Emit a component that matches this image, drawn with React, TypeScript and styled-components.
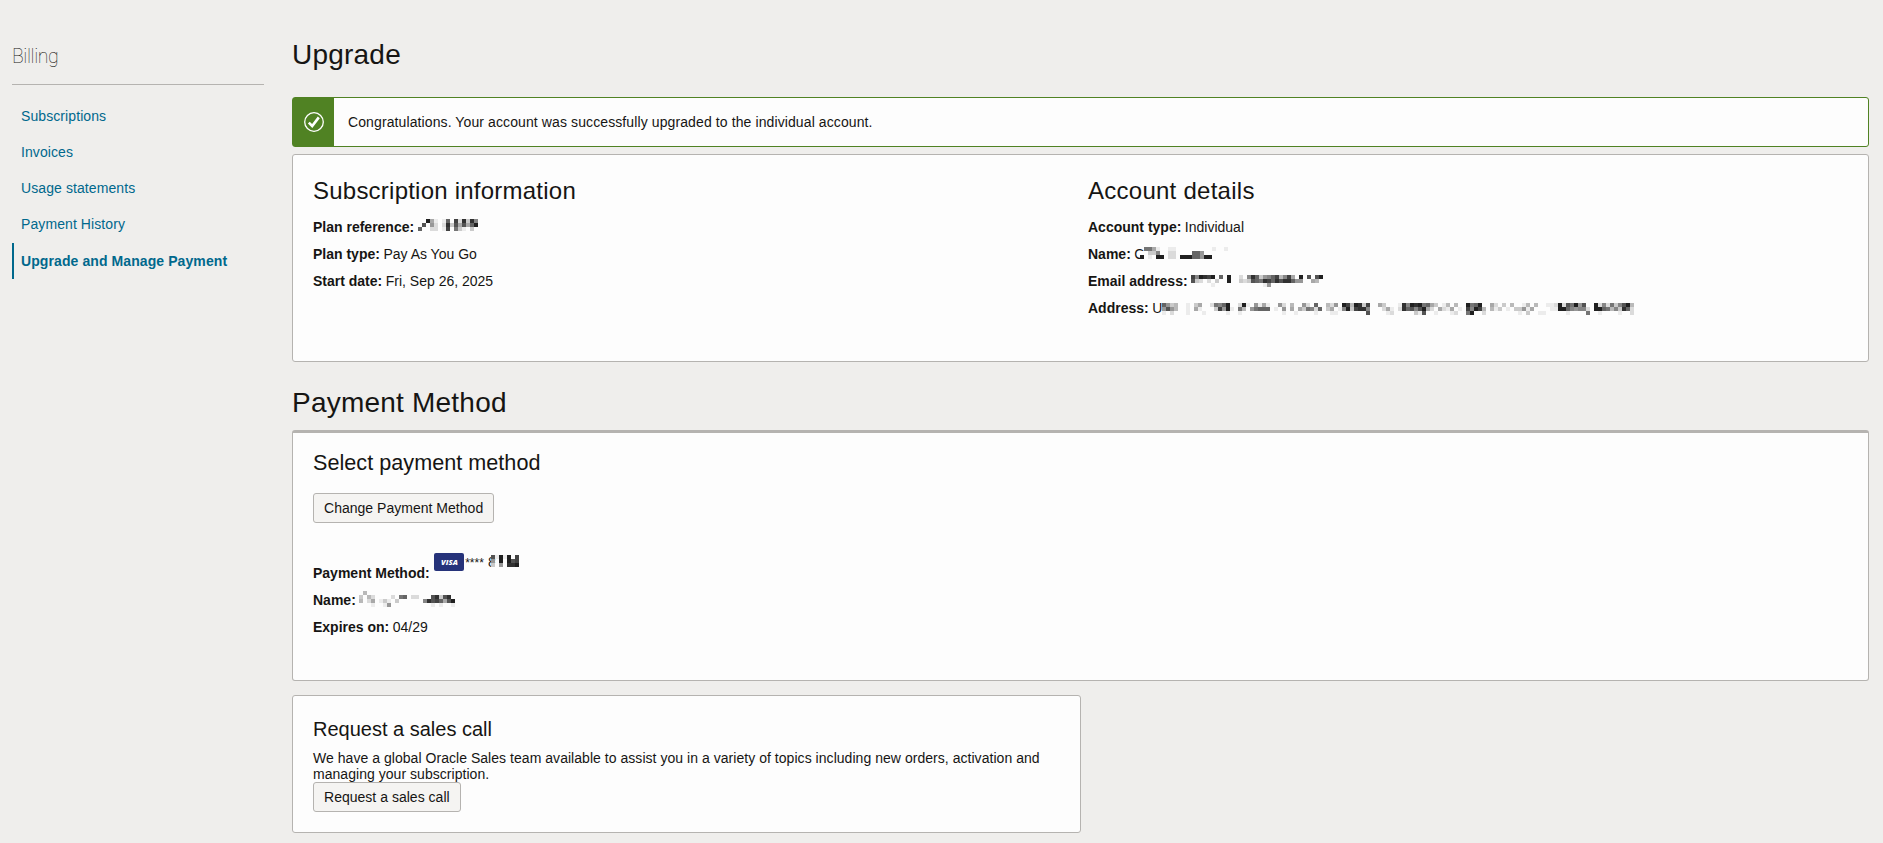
import React from "react";
import styled, { createGlobalStyle } from "styled-components";

const Global = createGlobalStyle`
  * { box-sizing: border-box; }
  body {
    margin: 0;
    background: #efeeec;
    color: #161513;
    font: 14px/16px "Liberation Sans", Arial, sans-serif;
  }
  #root { height: 843px; overflow: hidden; }
  h1, h2, h3, p, ul { margin: 0; padding: 0; font-weight: 400; }
`;

const Page = styled.div`
  display: flex;
  gap: 28px;
  height: 843px;
  padding: 0 14px 0 12px;
`;

const Sidebar = styled.nav`
  width: 252px;
  flex: none;
`;

const SideTitle = styled.h2`
  height: 85px;
  padding-top: 45px;
  border-bottom: 1px solid #b5b3b0;
  font: 100 19.5px/24px Roboto, "Liberation Sans", sans-serif;
  letter-spacing: -0.4px;
  color: #161513;
`;

const NavList = styled.ul`
  list-style: none;
  padding-top: 13px;
`;

const NavItem = styled.li<{ $active?: boolean }>`
  height: 36px;
  margin-top: ${(p) => (p.$active ? "1px" : "0")};
  padding-left: ${(p) => (p.$active ? "7px" : "9px")};
  border-left: ${(p) => (p.$active ? "2px solid #00688c" : "0")};
  line-height: 36px;
  letter-spacing: 0.09px;
  font-weight: ${(p) => (p.$active ? 700 : 400)};
  color: #00688c;
`;

const Main = styled.main`
  flex: 1;
  min-width: 0;
`;

const PageTitle = styled.h1<{ $top: number; $bottom: number }>`
  padding: ${(p) => p.$top}px 0 ${(p) => p.$bottom}px;
  font-size: 28px;
  line-height: 32px;
  letter-spacing: 0.22px;
`;

const Alert = styled.div`
  display: flex;
  height: 50px;
  margin-bottom: 7px;
  border: 1px solid #508223;
  border-radius: 3px;
  background: #fdfdfd;
  line-height: 48px;
  letter-spacing: 0.105px;
`;

const AlertIcon = styled.div`
  display: flex;
  align-items: center;
  justify-content: center;
  width: 41px;
  margin-right: 14px;
  background: #508223;
`;

const Card = styled.section<{ $height: number; $pad: number; $thick?: boolean; $width?: number }>`
  width: ${(p) => (p.$width ? `${p.$width}px` : "auto")};
  height: ${(p) => p.$height}px;
  padding: ${(p) => p.$pad}px 20px 0;
  border: 1px solid #b5b3b0;
  border-top-width: ${(p) => (p.$thick ? 3 : 1)}px;
  border-radius: 3px;
  background: #fdfdfd;
`;

const Columns = styled.div`
  display: grid;
  grid-template-columns: 775px 1fr;
`;

const Heading = styled.h3<{ $size: number; $gap: number; $spacing?: number }>`
  margin-bottom: ${(p) => p.$gap}px;
  font-size: ${(p) => p.$size}px;
  line-height: 28px;
  letter-spacing: ${(p) => p.$spacing ?? 0}px;
`;

const Field = styled.p`
  display: flex;
  gap: 3.5px;
  height: 27px;
  line-height: 27px;
  white-space: pre;
`;

const Button = styled.button`
  display: block;
  height: 30px;
  padding: 0 10px;
  border: 1px solid #b5b3b0;
  border-radius: 3px;
  background: #f5f4f2;
  color: #161513;
  font: inherit;
  letter-spacing: 0.02px;
`;

const PaymentFields = styled.div`
  padding-top: 37px;
`;

const CardNumber = styled.span`
  display: flex;
  align-items: center;
  height: 18px;
  margin: -7px 0 0 1px;
`;

const Stars = styled.span`
  margin: 2px 4px 0 1px;
  font-size: 12px;
`;

const Copy = styled.p`
  width: 740px;
  letter-spacing: 0.04px;
`;

const SalesGap = styled.div`
  height: 14px;
`;

const MosaicSvg = styled.svg<{ $top: number; $left: number }>`
  display: block;
  flex: none;
  margin: ${(p) => p.$top}px 0 0 ${(p) => p.$left}px;
`;

/* Each character is the darkness of one 4px cell in hex; "." leaves the cell clear. */
const Mosaic = ({ rows, top = 6, left = 0 }: { rows: string[]; top?: number; left?: number }) => {
  const width = Math.max(...rows.map((r) => r.length)) * 4;
  return (
    <MosaicSvg $top={top} $left={left} width={width} height={rows.length * 4} shapeRendering="crispEdges">
      {rows.flatMap((row, y) =>
        [...row].map((c, x) => {
          if (c === ".") return null;
          const v = 253 - parseInt(c, 16) * 17;
          return <rect key={`${x}-${y}`} x={x * 4} y={y * 4} width={4} height={4} fill={`rgb(${v},${v},${v})`} />;
        })
      )}
    </MosaicSvg>
  );
};

const CheckIcon = () => (
  <svg width="22" height="22" viewBox="0 0 22 22" fill="none" stroke="#fff">
    <circle cx="11" cy="11" r="9.3" strokeWidth="1.3" />
    <path d="M5.8 11.6l3.4 3.4L15.8 6.4" strokeWidth="2.6" />
  </svg>
);

const VisaIcon = () => (
  <svg width="30" height="18" viewBox="0 0 30 18">
    <rect width="30" height="18" rx="2" fill="#26337a" />
    <text x="7" y="12" fill="#fff" fontFamily="Open Sans" fontSize="7.6" fontWeight="800" fontStyle="italic" textLength="17">VISA</text>
  </svg>
);

const links = ["Subscriptions", "Invoices", "Usage statements", "Payment History"];

const planMosaic = ["..d51.19.b2c3c7", ".a.62.2c3a5a59d", "9..22.1b.831.3"];
const nameMosaic = [".8851..11.........1..1", "0033700220000996......", "d010dd022.ddd996dd...."];
const emailMosaic = ["b7dcbd.9.d..2.7c93679b47b5.d.a.ad", "a32.2.3..d..323a98cb9cacc966..54.", ".....1............16............."];
const addressMosaic = [
  "9634..1.35..2879d..2d1.6151..62.4..62.9..426.db4dc3b..53..." +
    "1c7dcd8953.14.4..d89d..52.3.4..14.4..112d2a8d6a..d272837ad4",
  "6a64..1.51...3b6d1.84.68999.1.6.5.538729.35.17d3bcc7...251." +
    "2c9a7ad52.5215.1.b7db4.413.1.33615....11dd976772.dd98473c92",
  "1.2...1...1.....1..1..........1..1....1...11.......a....12." +
    "....31a..1...12..8d..2........1.3..11.....1....8..1....1..2",
];
const cardMosaic = ["a1d1d.b", "6.d0dab", "3060ccd"];
const holderMosaic = [".4......................", "3.42....2.89.22...ac3ac.", "4.25.131.3......7cab95ad", "...1..16..........1.1..1"];

export default function App() {
  return (
    <Page>
      <Global />
      <Sidebar>
        <SideTitle>Billing</SideTitle>
        <NavList>
          {links.map((l) => (
            <NavItem key={l}>{l}</NavItem>
          ))}
          <NavItem $active>Upgrade and Manage Payment</NavItem>
        </NavList>
      </Sidebar>
      <Main>
        <PageTitle $top={39} $bottom={26}>Upgrade</PageTitle>
        <Alert>
          <AlertIcon><CheckIcon /></AlertIcon>
          Congratulations. Your account was successfully upgraded to the individual account.
        </Alert>
        <Card $height={208} $pad={22}>
          <Columns>
            <div>
              <Heading $size={24} $gap={9} $spacing={0.23}>Subscription information</Heading>
              <Field><b>Plan reference:</b><Mosaic top={5} rows={planMosaic} /></Field>
              <Field><b>Plan type:</b>Pay As You Go</Field>
              <Field><b>Start date:</b>Fri, Sep 26, 2025</Field>
            </div>
            <div>
              <Heading $size={24} $gap={9} $spacing={0.26}>Account details</Heading>
              <Field><b>Account type:</b>Individual</Field>
              <Field><b>Name:</b>C<Mosaic left={-8} rows={nameMosaic} /></Field>
              <Field><b>Email address:</b><Mosaic top={7} rows={emailMosaic} /></Field>
              <Field><b>Address:</b>U<Mosaic top={8} left={-4} rows={addressMosaic} /></Field>
            </div>
          </Columns>
        </Card>
        <PageTitle $top={25} $bottom={11}>Payment Method</PageTitle>
        <Card $height={251} $pad={16} $thick>
          <Heading $size={21.6} $gap={16} $spacing={0.03}>Select payment method</Heading>
          <Button>Change Payment Method</Button>
          <PaymentFields>
            <Field>
              <b>Payment Method:</b>
              <CardNumber>
                <VisaIcon />
                <Stars>****</Stars>8
                <Mosaic top={-2} left={-5} rows={cardMosaic} />
              </CardNumber>
            </Field>
            <Field><b>Name:</b><Mosaic rows={holderMosaic} top={4} /></Field>
            <Field><b>Expires on:</b>04/29</Field>
          </PaymentFields>
        </Card>
        <SalesGap />
        <Card $height={138} $pad={19} $width={789}>
          <Heading $size={20} $gap={7}>Request a sales call</Heading>
          <Copy>
            We have a global Oracle Sales team available to assist you in a variety of topics including new orders, activation and managing your subscription.
          </Copy>
          <Button>Request a sales call</Button>
        </Card>
      </Main>
    </Page>
  );
}
